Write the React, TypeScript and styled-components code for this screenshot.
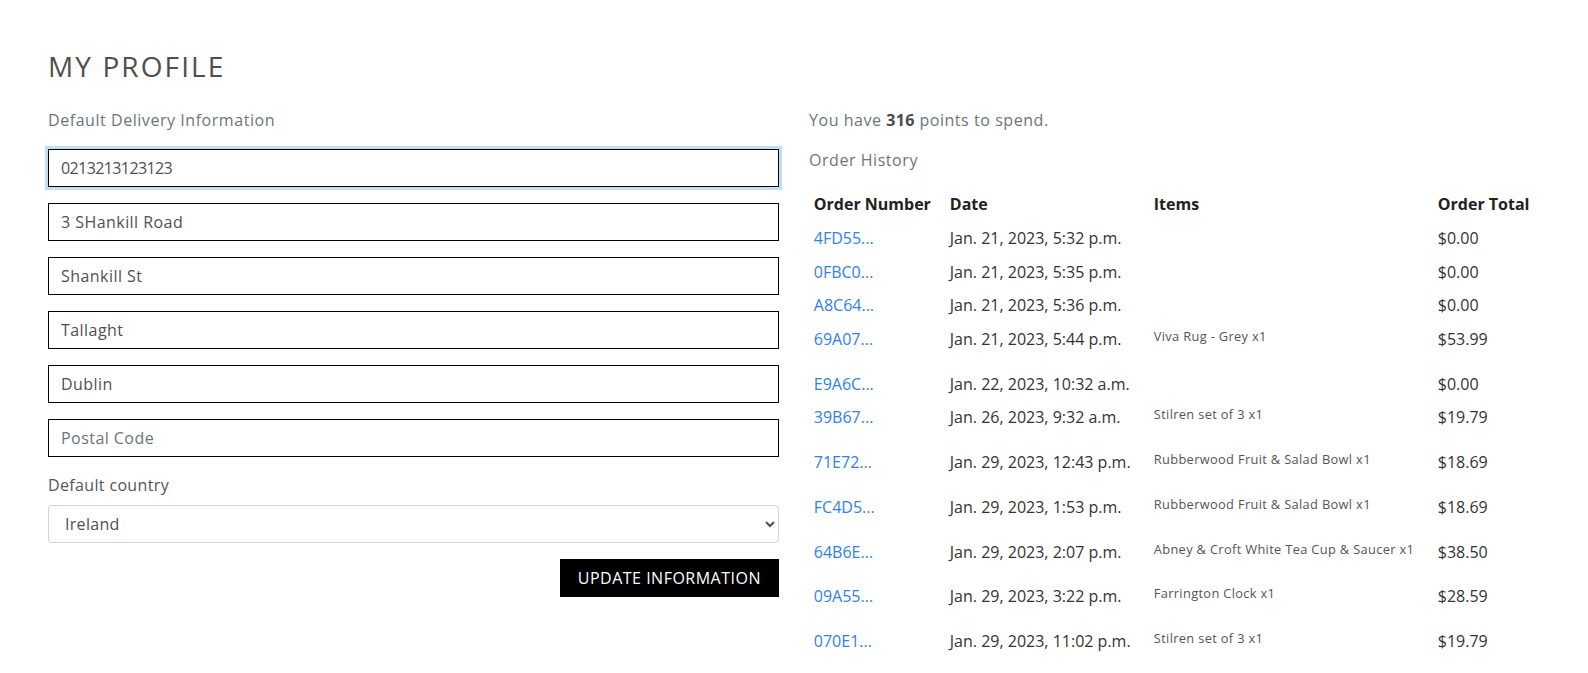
import React from "react";
import styled, { createGlobalStyle } from "styled-components";

const GlobalStyle = createGlobalStyle`
  html, body {
    margin: 0;
    padding: 0;
    background: #ffffff;
  }
  body {
    font-family: "Open Sans", "Noto Sans", Arial, sans-serif;
    font-size: 16px;
    line-height: 1.5;
    color: #212529;
  }
  * { box-sizing: border-box; }
`;

const Page = styled.div`
  padding: 50px 48px 40px;
`;

const Title = styled.h1`
  margin: 0 0 24px;
  font-size: 28px;
  line-height: 1.2;
  font-weight: 400;
  letter-spacing: 2.1px;
  color: #4f4f4f;
`;

const Columns = styled.div`
  display: grid;
  grid-template-columns: 1fr 1fr;
  column-gap: 30px;
  align-items: start;
`;

const Column = styled.section`
  display: flex;
  flex-direction: column;
`;

const Muted = styled.p`
  margin: 0 0 16px;
  font-size: 16px;
  line-height: 24px;
  letter-spacing: 0.55px;
  color: #6c757d;

  b {
    font-weight: 700;
    color: #4a4a4a;
    letter-spacing: 0.3px;
  }
`;

const FieldList = styled.div`
  display: flex;
  flex-direction: column;
  padding-top: 1px;
`;

const Field = styled.input<{ $focused?: boolean }>`
  display: block;
  width: 100%;
  height: 38px;
  margin: 0 0 16px;
  padding: 6px 12px;
  border: 1px solid #000;
  border-radius: 0;
  font-family: inherit;
  font-size: 16px;
  line-height: 24px;
  letter-spacing: ${(p) => (p.$focused ? "-0.6px" : "0.45px")};
  color: #505050;
  background: #fff;
  outline: none;
  box-shadow: ${(p) => (p.$focused ? "0 0 0 3px #c3dcf7" : "none")};

  &::placeholder {
    color: #6c757d;
    opacity: 1;
  }
`;

const FieldLabel = styled.label`
  display: block;
  margin: 0 0 8px;
  font-size: 16px;
  line-height: 24px;
  letter-spacing: 0.35px;
  color: #555;
`;

const Select = styled.select`
  display: block;
  width: 100%;
  height: 38px;
  margin: 0 0 16px;
  padding: 6px 8px 6px 12px;
  border: 1px solid #ced4da;
  border-radius: 4px;
  font-family: inherit;
  font-size: 16px;
  letter-spacing: 0.3px;
  color: #505050;
  background: #fff;
`;

const Actions = styled.div`
  display: flex;
  justify-content: flex-end;
`;

const Button = styled.button`
  height: 38px;
  padding: 6px 18px;
  border: none;
  border-radius: 0;
  background: #000;
  color: #fff;
  font-family: inherit;
  font-size: 16px;
  line-height: 24px;
  letter-spacing: 0.5px;
  text-transform: uppercase;
`;

const Table = styled.table`
  width: 100%;
  border-collapse: collapse;
  table-layout: fixed;
  color: #333;
`;

const Th = styled.th`
  padding: 4.8px;
  text-align: left;
  vertical-align: top;
  font-weight: 700;
  font-size: 16px;
  line-height: 24px;
  color: #212121;
`;

const Td = styled.td`
  padding: 4.8px;
  vertical-align: top;
  font-size: 16px;
  line-height: 24px;
  color: #333;
`;

const OrderLink = styled.a`
  color: #2f80f0;
  text-decoration: none;
`;

const ItemText = styled.p`
  margin: 0 0 16px;
  font-size: 12.8px;
  line-height: 19.2px;
  letter-spacing: 0.35px;
  color: #555;
`;

type Order = { id: string; date: string; items?: string; total: string };

const orders: Order[] = [
  { id: "4FD55...", date: "Jan. 21, 2023, 5:32 p.m.", total: "$0.00" },
  { id: "0FBC0...", date: "Jan. 21, 2023, 5:35 p.m.", total: "$0.00" },
  { id: "A8C64...", date: "Jan. 21, 2023, 5:36 p.m.", total: "$0.00" },
  { id: "69A07...", date: "Jan. 21, 2023, 5:44 p.m.", items: "Viva Rug - Grey x1", total: "$53.99" },
  { id: "E9A6C...", date: "Jan. 22, 2023, 10:32 a.m.", total: "$0.00" },
  { id: "39B67...", date: "Jan. 26, 2023, 9:32 a.m.", items: "Stilren set of 3 x1", total: "$19.79" },
  { id: "71E72...", date: "Jan. 29, 2023, 12:43 p.m.", items: "Rubberwood Fruit & Salad Bowl x1", total: "$18.69" },
  { id: "FC4D5...", date: "Jan. 29, 2023, 1:53 p.m.", items: "Rubberwood Fruit & Salad Bowl x1", total: "$18.69" },
  { id: "64B6E...", date: "Jan. 29, 2023, 2:07 p.m.", items: "Abney & Croft White Tea Cup & Saucer x1", total: "$38.50" },
  { id: "09A55...", date: "Jan. 29, 2023, 3:22 p.m.", items: "Farrington Clock x1", total: "$28.59" },
  { id: "070E1...", date: "Jan. 29, 2023, 11:02 p.m.", items: "Stilren set of 3 x1", total: "$19.79" },
];

export default function App() {
  return (
    <>
      <GlobalStyle />
      <Page>
        <Title>MY PROFILE</Title>
        <Columns>
          <Column>
            <Muted>Default Delivery Information</Muted>
            <FieldList>
              <Field $focused defaultValue="0213213123123" />
              <Field defaultValue="3 SHankill Road" />
              <Field defaultValue="Shankill St" />
              <Field defaultValue="Tallaght" />
              <Field defaultValue="Dublin" />
              <Field placeholder="Postal Code" />
            </FieldList>
            <FieldLabel htmlFor="country">Default country</FieldLabel>
            <Select id="country" defaultValue="IE">
              <option value="IE">Ireland</option>
              <option value="GB">United Kingdom</option>
            </Select>
            <Actions>
              <Button type="button">Update Information</Button>
            </Actions>
          </Column>
          <Column>
            <Muted>
              You have <b>316</b> points to spend.
            </Muted>
            <Muted>Order History</Muted>
            <Table>
              <colgroup>
                <col style={{ width: 136 }} />
                <col style={{ width: 204 }} />
                <col style={{ width: 284 }} />
                <col />
              </colgroup>
              <thead>
                <tr>
                  <Th>Order Number</Th>
                  <Th>Date</Th>
                  <Th>Items</Th>
                  <Th>Order Total</Th>
                </tr>
              </thead>
              <tbody>
                {orders.map((o) => (
                  <tr key={o.id}>
                    <Td>
                      <OrderLink href="#">{o.id}</OrderLink>
                    </Td>
                    <Td>{o.date}</Td>
                    <Td>{o.items ? <ItemText>{o.items}</ItemText> : null}</Td>
                    <Td>{o.total}</Td>
                  </tr>
                ))}
              </tbody>
            </Table>
          </Column>
        </Columns>
      </Page>
    </>
  );
}
